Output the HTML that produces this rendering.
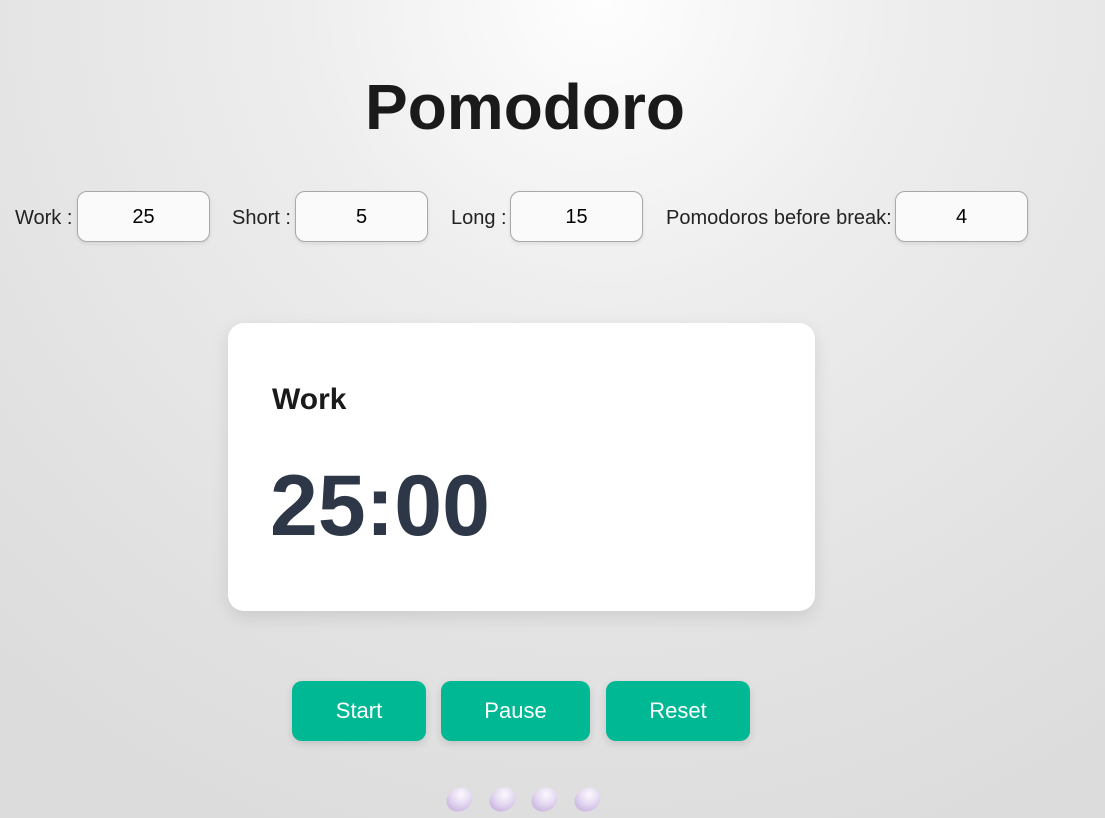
<!DOCTYPE html>
<html><head><style>
body{margin:0;width:1105px;height:818px;overflow:hidden;position:relative;
background:radial-gradient(ellipse 900px 900px at 600px 0px,#fefefe 0%,#ededed 35%,#e2e2e2 75%,#dcdcdc 100%);
font-family:"Liberation Sans",sans-serif;color:#1c1c1c}
.a{position:absolute}
h1{position:absolute;margin:0;left:365px;top:70px;font-size:64px;font-weight:bold;color:#1a1a1a;white-space:nowrap}
.lbl{position:absolute;top:207px;font-size:20px;color:#222;white-space:nowrap}
.in{position:absolute;top:191px;width:133px;height:51px;border:1px solid #a8a8a8;border-radius:10px;background:#fafafa;box-sizing:border-box;text-align:center;line-height:50px;font-size:20px;color:#000;box-shadow:0 2px 4px rgba(0,0,0,.08)}
.card{position:absolute;left:228px;top:323px;width:587px;height:288px;background:#fff;border-radius:16px;box-shadow:0 6px 18px rgba(0,0,0,.10)}
.btn{position:absolute;top:681px;height:60px;background:#00b894;border-radius:10px;color:#fff;font-size:22px;text-align:center;line-height:60px;box-shadow:0 3px 8px rgba(0,0,0,.12)}
.egg{position:absolute;top:788px;width:27px;height:23px;border-radius:50%;transform:rotate(-30deg);background:radial-gradient(circle at 65% 35%,#fbf8ff 0%,#e6dcf2 40%,#b9a0d6 100%)}
</style></head><body>
<h1>Pomodoro</h1>
<div class="lbl" style="left:15px">Work :</div><div class="in" style="left:77px">25</div>
<div class="lbl" style="left:232px">Short :</div><div class="in" style="left:295px">5</div>
<div class="lbl" style="left:451px">Long :</div><div class="in" style="left:510px">15</div>
<div class="lbl" style="left:666px">Pomodoros before break:</div><div class="in" style="left:895px">4</div>
<div class="card">
<div class="a" style="left:44px;top:60px;font-size:30px;font-weight:bold;color:#1a1a1a">Work</div>
<div class="a" style="left:42px;top:134px;font-size:86px;font-weight:bold;color:#2d3748">25:00</div>
</div>
<div class="btn" style="left:292px;width:134px">Start</div>
<div class="btn" style="left:441px;width:149px">Pause</div>
<div class="btn" style="left:606px;width:144px">Reset</div>
<div class="egg" style="left:446px"></div>
<div class="egg" style="left:489px"></div>
<div class="egg" style="left:531px"></div>
<div class="egg" style="left:574px"></div>
</body></html>
